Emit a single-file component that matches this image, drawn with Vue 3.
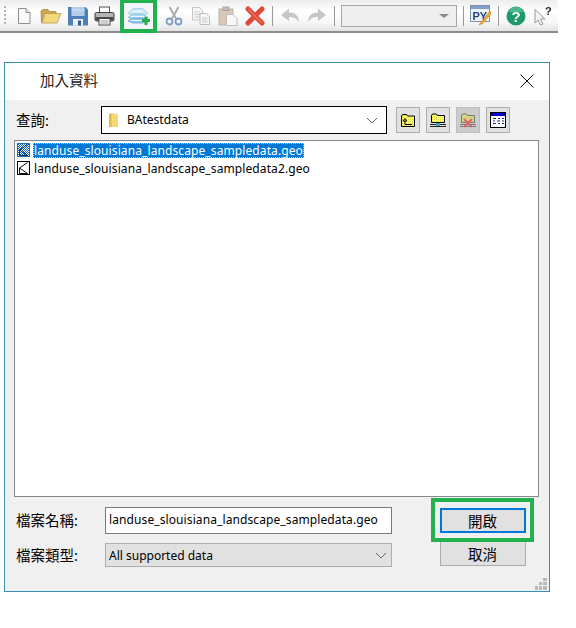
<script setup>
const files = [
  { name: 'landuse_slouisiana_landscape_sampledata.geo', selected: true },
  { name: 'landuse_slouisiana_landscape_sampledata2.geo', selected: false }
]
</script>

<template>
  <div class="page">
    <div class="toolbar">
      <span class="grip"></span>
      <span class="tool">
        <svg width="20" height="20" viewBox="0 0 20 20"><path d="M4.500 2.500h7.500l4 4v11h-11.500z" fill="#fafafa" stroke="#8f8f8f"/><path d="M12 2.500v4h4" fill="#e4e4e4" stroke="#8f8f8f"/></svg>
      </span>
      <span class="tool">
        <svg width="22" height="20" viewBox="0 0 22 20"><path d="M1.500 16.500l-.5-11.500 2-1.500h5l1.500 2h6.500v2h-12z" fill="#c9a850" stroke="#a58a3e" stroke-width=".8"/><path d="M2 17l3.500-9.500h15.500l-4 9.500z" fill="#f5d77c" stroke="#b89a48" stroke-width=".8"/></svg>
      </span>
      <span class="tool">
        <svg width="20" height="20" viewBox="0 0 20 20"><path d="M0 1h17.500l2.500 2.500v16h-20z" fill="#4f80ba"/><rect x="3.500" y="1" width="13" height="9" fill="#b4cee8"/><rect x="3.500" y="3.500" width="13" height="1" fill="#d5e3f1"/><rect x="5" y="13" width="10" height="6.500" fill="#eef2f6"/><rect x="10" y="14.500" width="3" height="5" fill="#2f5f99"/></svg>
      </span>
      <span class="tool">
        <svg width="21" height="20" viewBox="0 0 21 20"><rect x="5.500" y="1" width="10" height="6" fill="#fff" stroke="#555"/><rect x="1" y="6.500" width="19" height="8.500" rx="1.500" fill="#b5b5b5" stroke="#3d3d3d"/><rect x="1.500" y="11" width="18" height="3.500" fill="#4d4d4d"/><rect x="5" y="12.500" width="11" height="6.500" fill="#fff" stroke="#444"/><path d="M6.500 15h8M6.500 17h8" stroke="#999"/></svg>
      </span>
      <span class="tool tool-marked">
        <svg width="23" height="20" viewBox="0 0 23 20"><path d="M1 7.500l5-5h10l5 5-5 1.500h-10z" fill="#cde8f5" stroke="#9cc9e0" stroke-width=".8"/><path d="M1 11.500l5-3.500h10l5 3.500-5 1.500h-10z" fill="#aed8ef" stroke="#80b8d8" stroke-width=".8"/><path d="M1 15l5-3h10l5 3-5 2h-10z" fill="#8cc5e8" stroke="#69a6cf" stroke-width=".8"/><path d="M5 5.500h11M4 10.500h13M4 14.500h13" stroke="#eff8fc"/><path d="M15 14.500h8M19 11v8" stroke="#29ad48" stroke-width="3"/></svg>
      </span>
      <span class="tool after-marked">
        <svg width="18" height="20" viewBox="0 0 18 20"><path d="M4.500 1l6.500 11.500M13.500 1l-6.500 11.500" stroke="#a8a8a8" stroke-width="1.800"/><circle cx="4.500" cy="15.500" r="3" fill="none" stroke="#7c9dc4" stroke-width="1.800"/><circle cx="13.500" cy="15.500" r="3" fill="none" stroke="#7c9dc4" stroke-width="1.800"/></svg>
      </span>
      <span class="tool">
        <svg width="20" height="20" viewBox="0 0 20 20"><path d="M1.500 1.500h7l3 3v9.500h-10z" fill="#f6f6f6" stroke="#c5c5c5"/><path d="M3.500 6h5M3.500 8.500h6M3.500 11h6" stroke="#c8c8c8"/><path d="M9 7.500h6l3.500 3.500v7.500h-9.500z" fill="#f8f8f8" stroke="#bcbcbc"/><path d="M11 12h5.500M11 14h5.500M11 16h5.500" stroke="#c8c8c8"/></svg>
      </span>
      <span class="tool">
        <svg width="20" height="20" viewBox="0 0 20 20"><rect x="1" y="3" width="14" height="16" fill="#d8c8b8" stroke="#c0b2a4"/><rect x="5" y="1" width="6" height="3.500" fill="#bdbdbd" stroke="#a8a8a8"/><path d="M8.500 8.500h6.500l4 4v7h-10.500z" fill="#f8f8f8" stroke="#bdbdbd"/></svg>
      </span>
      <span class="tool">
        <svg width="20" height="20" viewBox="0 0 20 20"><path d="M3 3l14 14M17 3l-14 14" stroke="#e0493a" stroke-width="5" stroke-linecap="round"/><path d="M3 3l14 14" stroke="#f0705f" stroke-width="1.500"/></svg>
      </span>
      <span class="sep"></span>
      <span class="tool">
        <svg width="20" height="18" viewBox="0 0 20 18"><path d="M1 8l8-6.500v4c6 0 10 3 10 10-2-4-5-5.500-10-5.500v4z" fill="#c6c6c6"/></svg>
      </span>
      <span class="tool">
        <svg width="20" height="18" viewBox="0 0 20 18"><path d="M19 8l-8-6.500v4c-6 0-10 3-10 10 2-4 5-5.500 10-5.500v4z" fill="#c6c6c6"/></svg>
      </span>
      <span class="sep sep-right"></span>
      <div class="tool-combo"><i class="tool-arrow"></i></div>
      <span class="sep"></span>
      <span class="tool">
        <svg width="21" height="21" viewBox="0 0 21 21"><rect x=".5" y=".5" width="19" height="16" fill="#eef3f8" stroke="#7b94ae"/><rect x="1" y="1" width="18" height="3" fill="#7fa3c6"/><text x="2.500" y="14.500" class="py-text">PY</text><path d="M20 6l-8.500 10.500-2.500 3.500 4-1.500 8.500-10.500z" fill="#f2a53c" stroke="#c77a1b" stroke-width=".5"/></svg>
      </span>
      <span class="sep"></span>
      <span class="tool">
        <svg width="20" height="20" viewBox="0 0 20 20"><circle cx="10" cy="10" r="9.500" fill="#1f9a6a"/><path d="M10 1a9 9 0 0 1 8 5h-16a9 9 0 0 1 8-5z" fill="#4bb88f"/><text x="10" y="15.500" class="help-text">?</text></svg>
      </span>
      <span class="tool">
        <svg width="18" height="20" viewBox="0 0 18 20"><path d="M1 3.500v13.500l3-3 2.500 5 2.500-1-2.500-5h4.500z" fill="#f3f3f3" stroke="#9a9a9a"/><text x="11" y="9" class="what-text">?</text></svg>
      </span>
    </div>

    <div class="dialog">
      <header class="title-bar">
        <span class="title">加入資料</span>
        <svg class="close" width="14" height="14" viewBox="0 0 14 14"><path d="M.5.500l13 13M13.500.500l-13 13" stroke="#111" fill="none"/></svg>
      </header>

      <div class="body">
        <div class="look-row">
          <label class="look-label">查詢:</label>
          <div class="look-box">
            <svg class="folder" width="10" height="14" viewBox="0 0 10 14"><path d="M0 1.500h5v-1h-4z" fill="#e2b93f"/><rect x="0" y="1" width="9" height="13" fill="#f7d675"/><rect x="0" y="1" width="2.500" height="13" fill="#e5b947"/></svg>
            <span class="look-value">BAtestdata</span>
            <svg class="chevron" width="12" height="7" viewBox="0 0 12 7"><path d="M1 1l5 5 5-5" fill="none" stroke="#666"/></svg>
          </div>
          <div class="nav-buttons">
            <button class="nav-btn">
              <svg width="16" height="14" viewBox="0 0 16 14"><defs><pattern id="dots" width="2" height="2" patternUnits="userSpaceOnUse"><rect width="2" height="2" fill="#ffff66"/><rect width="1" height="1" fill="#d8d850"/></pattern></defs><path d="M1.500 13.500v-10.500l1-1.500h4l1 1.500h7v10.500z" fill="url(#dots)" stroke="#000"/><path d="M5 5.500l-2 2.500h4zM5 8v3.500h7" fill="none" stroke="#000"/></svg>
            </button>
            <button class="nav-btn">
              <svg width="16" height="15" viewBox="0 0 16 15"><path d="M1.500 9.500v-7l1-1.500h4l1 1.500h7v7z" fill="url(#dots)" stroke="#000"/><path d="M0 11.500h6M10 11.500h6M0 13.500h16" stroke="#222"/><rect x="6" y="10" width="4" height="3" fill="#43a6b8"/></svg>
            </button>
            <button class="nav-btn nav-btn-off">
              <svg width="16" height="15" viewBox="0 0 16 15"><path d="M1.500 9.500v-7l1-1.500h4l1 1.500h7v7z" fill="#d4d484" stroke="#777"/><path d="M0 11.500h16M0 13.500h16" stroke="#777"/><path d="M4 6l8 8M12 6l-8 8" stroke="#e06464" stroke-width="2"/></svg>
            </button>
            <button class="nav-btn">
              <svg width="16" height="16" viewBox="0 0 16 16"><rect x=".5" y=".5" width="15" height="15" fill="#fff" stroke="#000"/><rect x="1" y="1" width="14" height="3" fill="#0000c8"/><path d="M3 6.500h3M8 6.500h2M12 6.500h2M3 9h2M7 9h3M12 9h2M3 11.500h3M8 11.500h2M12 11.500h2" stroke="#1b2f8f" stroke-width="1.200"/></svg>
            </button>
          </div>
        </div>

        <ul class="file-list">
          <li v-for="file in files" :key="file.name" class="file-row">
            <svg class="file-icon" width="13" height="14" viewBox="0 0 13 14">
              <defs><pattern id="sel" width="2" height="2" patternUnits="userSpaceOnUse"><rect width="2" height="2" fill="#fff"/><rect width="1" height="1" fill="#0a64b8"/><rect x="1" y="1" width="1" height="1" fill="#0a64b8"/></pattern></defs>
              <rect x=".5" y=".5" width="12" height="13" :fill="file.selected ? 'url(#sel)' : '#fff'" :stroke="file.selected ? '#1f6fb4' : '#000'"/>
              <path d="M10.500 1.500l-8 5.500 8 5.500M2.500 7v5.500h8" fill="none" :stroke="file.selected ? '#0a2f5c' : '#111'"/>
            </svg>
            <span class="file-name" :class="{ selected: file.selected }">{{ file.name }}</span>
          </li>
        </ul>

        <div class="bottom">
          <div class="fields">
            <div class="field-row">
              <label class="field-label">檔案名稱:</label>
              <div class="name-input">landuse_slouisiana_landscape_sampledata.geo</div>
            </div>
            <div class="field-row">
              <label class="field-label">檔案類型:</label>
              <div class="type-select">
                <span>All supported data</span>
                <svg class="chevron" width="12" height="7" viewBox="0 0 12 7"><path d="M1 1l5 5 5-5" fill="none" stroke="#666"/></svg>
              </div>
            </div>
          </div>
          <div class="actions">
            <div class="open-mark">
              <button class="action-btn action-default">開啟</button>
            </div>
            <button class="action-btn action-cancel">取消</button>
          </div>
        </div>

        <svg class="resize" width="12" height="12" viewBox="0 0 12 12"><path d="M8 0h4v3h-4zM4 4h3v3h-3zM8 4h4v3h-4zM0 8h3v4h-3zM4 8h3v4h-3zM8 8h4v4h-4z" fill="#b8b8b8"/></svg>
      </div>
    </div>
  </div>
</template>

<style>
html, body {
  background: #fff;
}
</style>

<style scoped>
.page {
  width: 576px;
  height: 628px;
  overflow: hidden;
  background: #fff;
  font-family: "Noto Sans", "Noto Sans CJK TC", sans-serif;
  color: #000;
}

.toolbar {
  width: 558px;
  height: 33px;
  box-sizing: border-box;
  padding-left: 10px;
  display: flex;
  align-items: center;
  background: linear-gradient(#ececec, #fff 35%, #f6f6f6 75%, #e2e2e2);
  border-bottom: 2px solid #8c8c8c;
  border-top-right-radius: 4px;
  position: relative;
}

.grip {
  position: absolute;
  left: 4px;
  top: 6px;
  width: 2px;
  height: 20px;
  background: repeating-linear-gradient(#b5b5b5 0 2px, transparent 2px 4px);
}

.tool {
  flex: none;
  width: 27px;
  height: 31px;
  display: flex;
  align-items: center;
  justify-content: center;
}

.tool svg {
  filter: blur(0.35px);
}

.tool-marked {
  width: 37px;
  height: 33px;
  box-sizing: border-box;
  margin: 0 0 -2px 2px;
  align-self: flex-start;
  background: #f4f7f9;
  border: 4px solid #22b14c;
  border-top-width: 3px;
}

.after-marked {
  margin-left: 3.5px;
}

.sep {
  flex: none;
  width: 1px;
  height: 20px;
  margin: 0 3.5px;
  background: #9a9a9a;
}

.sep-right {
  margin-right: 6px;
}

.tool-combo {
  flex: none;
  width: 116px;
  height: 22px;
  box-sizing: border-box;
  margin-right: 2px;
  border: 1px solid #a6a6a6;
  background: #efefef;
  position: relative;
}

.tool-arrow {
  position: absolute;
  right: 7px;
  top: 8px;
  border: 4px solid transparent;
  border-top: 4px solid #8a8a8a;
  border-left-width: 5px;
  border-right-width: 5px;
}

.py-text {
  font: 700 11px "Liberation Sans", sans-serif;
  fill: #1f3f7a;
}

.help-text {
  font: 700 15px "Liberation Sans", sans-serif;
  fill: #fff;
  text-anchor: middle;
}

.what-text {
  font: 700 11px "Liberation Sans", sans-serif;
  fill: #222;
}

.dialog {
  width: 546px;
  height: 530px;
  box-sizing: border-box;
  margin: 29px 0 0 4px;
  border: 1px solid #3a8fb2;
  display: flex;
  flex-direction: column;
}

.title-bar {
  height: 37px;
  flex: none;
  box-sizing: border-box;
  background: #fff;
  display: flex;
  align-items: center;
  justify-content: space-between;
  padding: 0 15px 2px 35px;
}

.title {
  font-size: 14.5px;
  color: #222;
  margin-bottom: 2px;
}

.body {
  flex: 1;
  background: #f0f0f0;
  position: relative;
  padding: 6px 10px 0 9px;
  display: flex;
  flex-direction: column;
  min-height: 0;
}

.look-row {
  display: flex;
  align-items: center;
  height: 28px;
}

.look-label {
  width: 87px;
  padding-left: 2px;
  box-sizing: border-box;
  font-size: 14.5px;
  margin-bottom: 2px;
}

.look-box {
  width: 286px;
  height: 28px;
  box-sizing: border-box;
  border: 1px solid #000;
  background: #fff;
  display: flex;
  align-items: center;
  padding: 0 8px 0 7px;
}

.folder {
  margin-right: 8px;
}

.look-value {
  font-size: 12px;
  flex: 1;
  margin-bottom: 2px;
}

.nav-buttons {
  display: flex;
  gap: 6px;
  margin-left: 9px;
}

.nav-btn {
  width: 24px;
  height: 26px;
  padding: 0;
  box-sizing: border-box;
  border: 1px solid #adadad;
  background: #e1e1e1;
  display: flex;
  align-items: center;
  justify-content: center;
}

.nav-btn-off {
  background: #cccccc;
  border-color: #bfbfbf;
}

.file-list {
  list-style: none;
  width: 525px;
  height: 357px;
  box-sizing: border-box;
  margin: 6px 0 0 0;
  padding: 0 2px;
  border: 1px solid #828790;
  background: #fff;
}

.file-row {
  height: 18px;
  display: flex;
  align-items: center;
  font-size: 12px;
  letter-spacing: 0.1px;
}

.file-icon {
  flex: none;
  margin-right: 3px;
}

.file-name {
  padding: 0 1px;
  line-height: 15px;
  white-space: nowrap;
}

.file-name.selected {
  background: #0078d7;
  color: #fff;
  outline: 1px dotted #ffc58a;
  outline-offset: -1px;
}

.bottom {
  display: flex;
  justify-content: space-between;
  margin-top: 11px;
}

.fields {
  display: flex;
  flex-direction: column;
  gap: 9px;
  margin-top: -1px;
}

.field-row {
  display: flex;
  align-items: center;
}

.field-label {
  width: 91px;
  padding-left: 2px;
  box-sizing: border-box;
  font-size: 14.5px;
  margin-bottom: 2px;
}

.name-input {
  width: 287px;
  height: 27px;
  box-sizing: border-box;
  border: 1px solid #7a7a7a;
  background: #fff;
  font-size: 12px;
  letter-spacing: 0.1px;
  line-height: 24px;
  padding-left: 3px;
  white-space: nowrap;
  overflow: hidden;
}

.type-select {
  width: 287px;
  height: 24px;
  box-sizing: border-box;
  border: 1px solid #adadad;
  background: #e1e1e1;
  font-size: 12px;
  display: flex;
  align-items: center;
  justify-content: space-between;
  padding: 0 4px 0 3px;
}

.actions {
  width: 103px;
  margin: -10px 5px 0 0;
  display: flex;
  flex-direction: column;
  align-items: center;
}

.open-mark {
  width: 103px;
  height: 44px;
  box-sizing: border-box;
  border: 4px solid #22b14c;
  display: flex;
  align-items: center;
  justify-content: center;
  position: relative;
  z-index: 1;
}

.action-btn {
  width: 86px;
  height: 25px;
  box-sizing: border-box;
  padding: 0;
  background: #e1e1e1;
  border: 1px solid #adadad;
  font: 14.5px "Noto Sans CJK TC", sans-serif;
  color: #000;
}

.action-default {
  border: 2px solid #0078d7;
}

.action-cancel {
  margin-top: -1px;
}

.resize {
  position: absolute;
  right: 2px;
  bottom: 1px;
}
</style>
